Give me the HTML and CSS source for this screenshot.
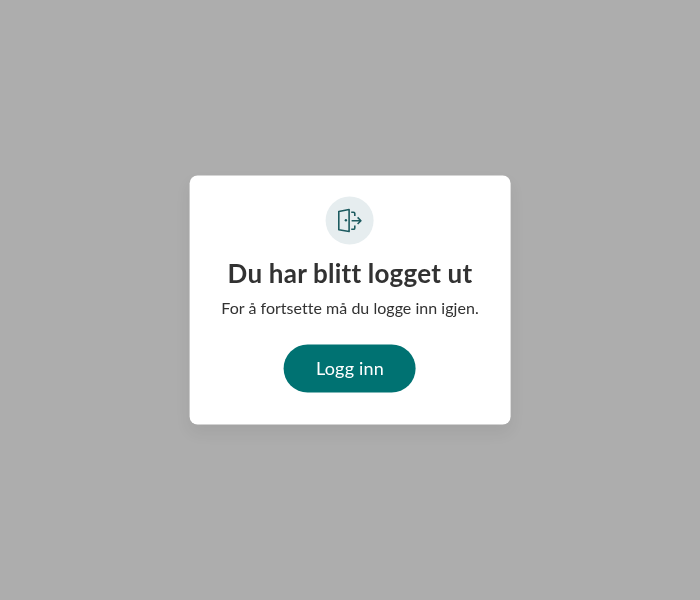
FILE: index.html
```html
<!DOCTYPE html>
<html lang="nb">
<head>
<meta charset="utf-8">
<title>Du har blitt logget ut</title>
<link rel="stylesheet" href="styles.css">
</head>
<body>
<main class="dialog">
  <div class="badge">
    <svg class="icon" viewBox="0 0 26 26" aria-hidden="true">
      <path d="M12.500 2 2.200 4v18.200L12.500 24zM14.600 4.700h2.200q1.400 0 1.400 1.400v2.400M18.200 18v2.400q0 1.400-1.400 1.400h-2.200M15 13.200h9.200M21 9.900l3.300 3.300-3.300 3.300"/>
      <circle class="knob" cx="9.300" cy="12.700" r="1.200"/>
    </svg>
  </div>
  <h1 class="title">Du har blitt logget ut</h1>
  <p class="text">For å fortsette må du logge inn igjen.</p>
  <button class="button" type="button">Logg inn</button>
</main>
</body>
</html>
```
FILE: styles.css
```css
* { box-sizing: border-box; }
body {
  margin: 0;
  min-height: 100vh;
  background: #adadad;
  color: #323232;
  font-family: Lato, sans-serif;
  font-variant-ligatures: none;
}
.dialog {
  position: fixed;
  top: 50%;
  left: 50%;
  transform: translate(-50%, -50%);
  width: 320.8px;
  height: 249px;
  padding-top: 21px;
  display: flex;
  flex-direction: column;
  align-items: center;
  background: #fff;
  border-radius: 8px;
  box-shadow: 0 8px 16px rgba(0, 0, 0, .06);
}
.badge {
  width: 48px;
  height: 48px;
  border-radius: 50%;
  background: #e6edef;
  display: grid;
  place-items: center;
}
.icon {
  width: 26px;
  height: 26px;
  fill: none;
  stroke: #1d5b60;
  stroke-width: 1.6;
  stroke-linejoin: round;
}
.knob { fill: #1d5b60; stroke: none; }
.title {
  margin: 7px 0 0;
  font-size: 26px;
  line-height: 42px;
  font-weight: 700;
  letter-spacing: .22px;
  white-space: nowrap;
}
.text {
  margin: 2px 0 0;
  font-size: 16px;
  line-height: 24px;
  letter-spacing: .03px;
  white-space: nowrap;
}
.button {
  margin-top: 25px;
  width: 132px;
  height: 48px;
  padding: 0 0 2px;
  border: 0;
  border-radius: 24px;
  background: #007272;
  color: #fff;
  font: 18px Lato, sans-serif;
  letter-spacing: .2px;
}
```
